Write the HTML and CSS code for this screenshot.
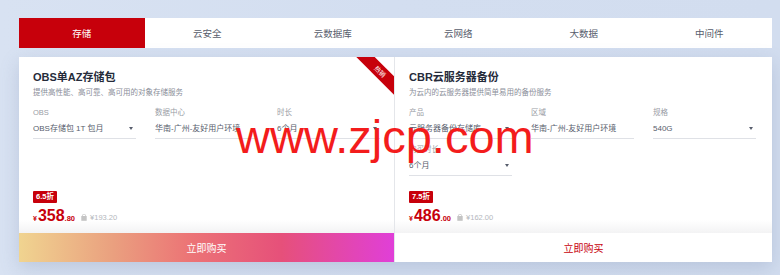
FILE: index.html
```html
<!DOCTYPE html>
<html lang="zh-CN">
<head>
<meta charset="utf-8">
<link rel="stylesheet" href="styles.css">
</head>
<body>
<div class="wrap">
  <nav class="tabs">
    <div class="tab active">存储</div>
    <div class="tab">云安全</div>
    <div class="tab">云数据库</div>
    <div class="tab">云网络</div>
    <div class="tab">大数据</div>
    <div class="tab">中间件</div>
  </nav>
  <div class="cards">
    <section class="card left">
      <div class="ribbon"><span>热销</span></div>
      <div class="body">
        <h2 class="title">OBS单AZ存储包</h2>
        <p class="sub">提供高性能、高可靠、高可用的对象存储服务</p>
        <div class="fields">
          <div class="field"><div class="label">OBS</div><div class="select drop">OBS存储包 1T 包月</div></div>
          <div class="field"><div class="label">数据中心</div><div class="select">华南-广州-友好用户环境</div></div>
          <div class="field"><div class="label">时长</div><div class="select drop">6个月</div></div>
        </div>
        <div class="pricebox">
          <span class="badge">6.5折</span>
          <div class="price"><span class="cur">¥</span><span class="int">358</span><span class="dec">.80</span>
            <span class="save"><svg width="6" height="7" viewBox="0 0 6 7"><path d="M1.5 2V1.2C1.5 .6 2 .3 3 .3S4.5 .6 4.5 1.2V2" fill="none" stroke="#c4c4c4" stroke-width=".8"/><rect x=".3" y="2" width="5.4" height="4.8" fill="#c4c4c4"/></svg>¥193.20</span></div>
        </div>
      </div>
      <button class="buy grad">立即购买</button>
    </section>
    <section class="card right">
      <div class="body">
        <h2 class="title">CBR云服务器备份</h2>
        <p class="sub">为云内的云服务器提供简单易用的备份服务</p>
        <div class="fields">
          <div class="field"><div class="label">产品</div><div class="select drop">云服务器备份存储库</div></div>
          <div class="field"><div class="label">区域</div><div class="select">华南-广州-友好用户环境</div></div>
          <div class="field"><div class="label">规格</div><div class="select drop">540G</div></div>
          <div class="field"><div class="label">购买时长</div><div class="select drop">6个月</div></div>
        </div>
        <div class="pricebox">
          <span class="badge">7.5折</span>
          <div class="price"><span class="cur">¥</span><span class="int">486</span><span class="dec">.00</span>
            <span class="save"><svg width="6" height="7" viewBox="0 0 6 7"><path d="M1.5 2V1.2C1.5 .6 2 .3 3 .3S4.5 .6 4.5 1.2V2" fill="none" stroke="#c4c4c4" stroke-width=".8"/><rect x=".3" y="2" width="5.4" height="4.8" fill="#c4c4c4"/></svg>¥162.00</span></div>
        </div>
      </div>
      <button class="buy plain">立即购买</button>
    </section>
  </div>
</div>
<div class="watermark">www.zjcp.com</div>
</body>
</html>
```
FILE: styles.css
```css
* { box-sizing: border-box; }
html, body { margin: 0; }
body {
  width: 780px;
  height: 275px;
  overflow: hidden;
  background: linear-gradient(90deg, #d8e2f2 0%, #d3def0 50%, #d2ddef 100%);
  font-family: "Liberation Sans", Arial, "Noto Sans CJK SC", sans-serif;
  position: relative;
}
.wrap {
  padding: 18px 8px 0 19px;
}
.tabs {
  display: grid;
  grid-template-columns: repeat(6, 1fr);
  height: 30px;
  background: #fff;
}
.tab {
  display: flex;
  align-items: center;
  justify-content: center;
  font-size: 9.5px;
  color: #575d6c;
  font-family: "Noto Sans CJK SC", sans-serif;
}
.tab.active {
  background: #c7000b;
  color: #fff;
}
.cards {
  margin-top: 9px;
  display: grid;
  grid-template-columns: 376px 377px;
  height: 205px;
  box-shadow: 0 6px 18px rgba(90, 110, 150, 0.22);
}
.card {
  position: relative;
  display: flex;
  flex-direction: column;
  background: #fff;
  overflow: hidden;
}
.card.left { border-right: 1px solid #e4e6ea; }
.body {
  flex: 1;
  display: flex;
  flex-direction: column;
  padding: 13px 14px 4px 14px;
  background: linear-gradient(180deg, #fff calc(100% - 13px), #f3f3f4 100%);
}
.title {
  margin: 0;
  font-size: 11px;
  line-height: 14px;
  font-weight: bold;
  color: #252b3a;
}
.sub {
  margin: 2px 0 0;
  font-size: 7.5px;
  line-height: 11px;
  color: #8a8e99;
  font-family: "Noto Sans CJK SC", sans-serif;
}
.fields {
  margin-top: 10px;
  display: grid;
  grid-template-columns: repeat(3, 103px);
  column-gap: 19px;
  row-gap: 5px;
}
.label {
  font-size: 7.5px;
  line-height: 11px;
  color: #999ca5;
}
.select {
  position: relative;
  margin-top: 1px;
  height: 20px;
  line-height: 19px;
  font-size: 8px;
  color: #575d6c;
  border-bottom: 1px solid #dfe1e6;
  white-space: nowrap;
  overflow: hidden;
}
.select.drop::after {
  content: "";
  position: absolute;
  right: 3px;
  top: 8px;
  border-left: 2.5px solid transparent;
  border-right: 2.5px solid transparent;
  border-top: 3px solid #575d6c;
}
.pricebox {
  margin-top: auto;
  display: flex;
  flex-direction: column;
  align-items: flex-start;
}
.badge {
  background: #c7000b;
  color: #fff;
  font-size: 7.5px;
  font-weight: bold;
  line-height: 12px;
  height: 12px;
  padding: 0 3px;
  border-radius: 1px;
}
.price {
  margin-top: 3px;
  display: flex;
  align-items: baseline;
  color: #c7000b;
  font-weight: bold;
  line-height: 20px;
}
.cur { font-size: 7px; margin-right: 1px; }
.int { font-size: 16px; }
.dec { font-size: 7.5px; }
.save {
  margin-left: 6px;
  font-size: 7.5px;
  font-weight: normal;
  color: #b4b7bd;
  display: inline-flex;
  align-items: center;
  gap: 3px;
}
.buy {
  height: 29px;
  border: 0;
  margin: 0;
  padding: 0;
  font-size: 10px;
  font-family: "Noto Sans CJK SC", sans-serif;
  cursor: pointer;
}
.buy.grad {
  color: #fff;
  background: linear-gradient(90deg, #f0d490 0%, #eaa07f 25%, #ec7576 45%, #e6507a 70%, #e03fd8 100%);
}
.buy.plain {
  color: #c7000b;
  background: #fff;
}
.ribbon {
  position: absolute;
  top: 0;
  right: 0;
  width: 38px;
  height: 38px;
  overflow: hidden;
}
.ribbon span {
  position: absolute;
  left: -6.5px;
  top: 8px;
  width: 60px;
  height: 13px;
  line-height: 13px;
  text-align: center;
  transform: rotate(45deg);
  background: #c7000b;
  color: #fff;
  font-size: 6.5px;
  font-family: "Noto Sans CJK SC", sans-serif;
}
.watermark {
  position: absolute;
  left: 236px;
  top: 113px;
  font-family: "Liberation Sans", sans-serif;
  font-size: 47px;
  line-height: 1;
  color: #f31c1c;
  white-space: nowrap;
  pointer-events: none;
}
```
